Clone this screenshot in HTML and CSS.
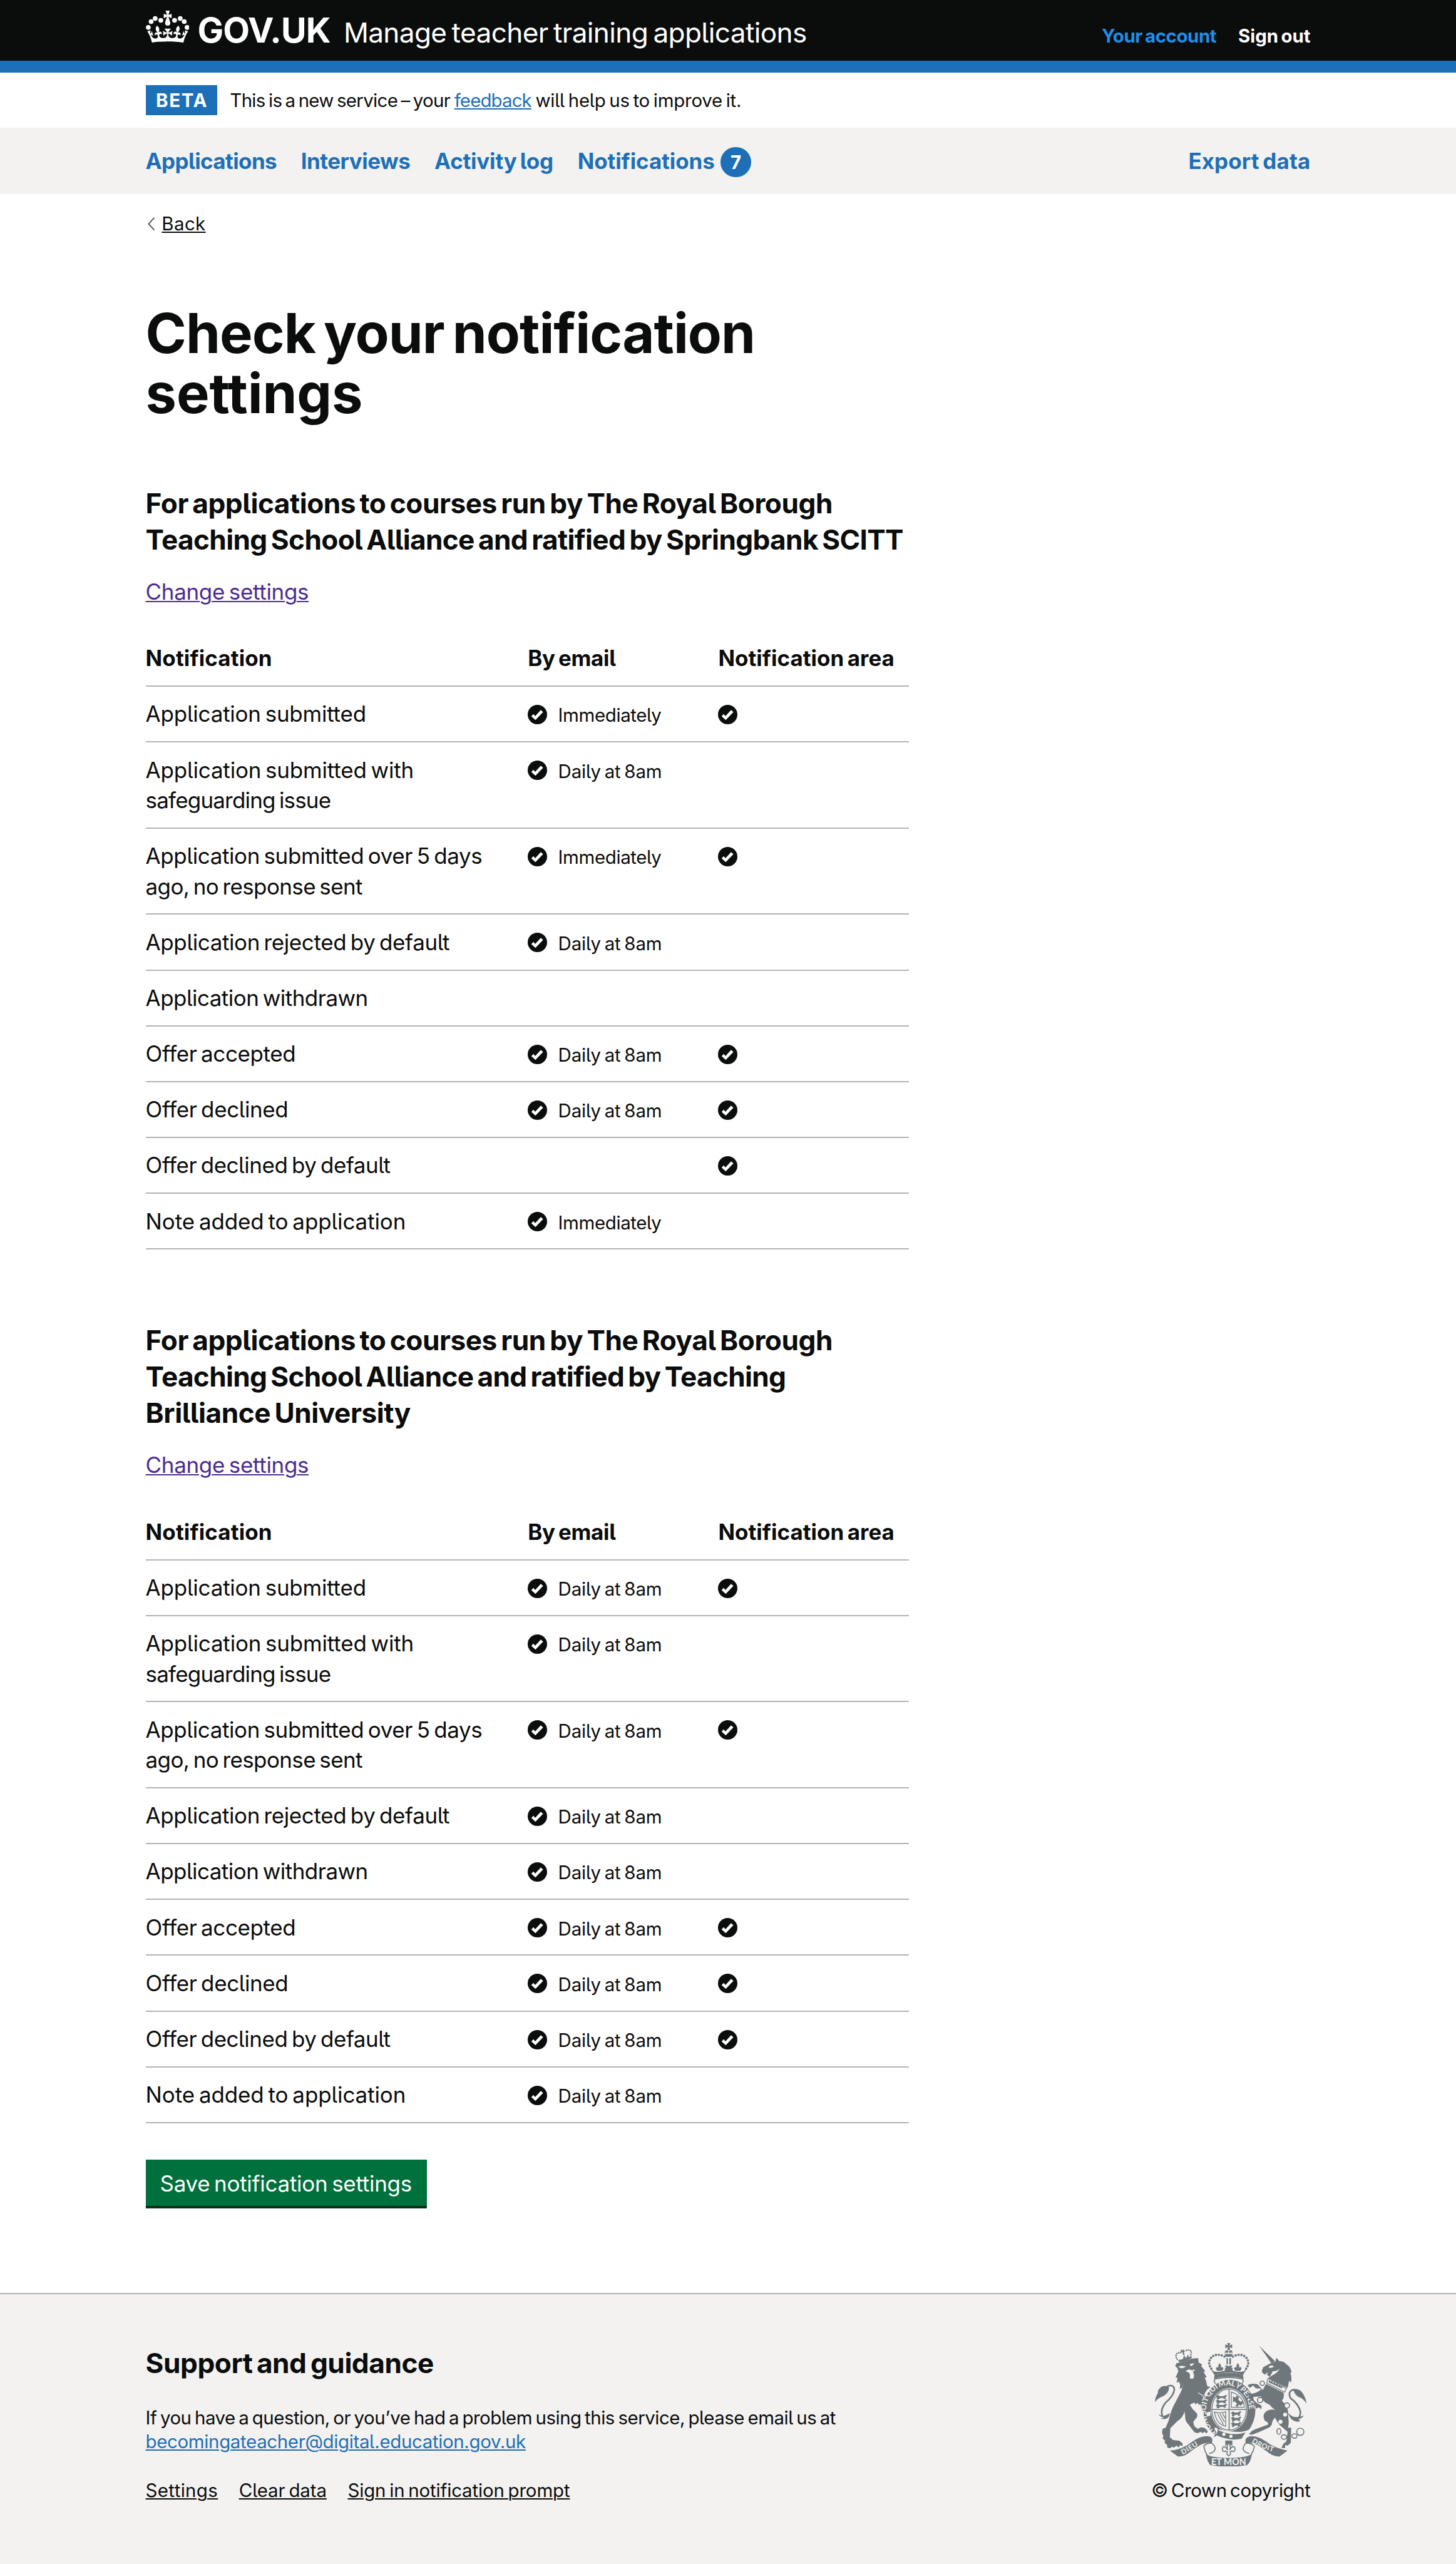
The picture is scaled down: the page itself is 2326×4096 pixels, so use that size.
FILE: index.html
```html
<!DOCTYPE html>
<html lang="en">
<head>
<meta charset="utf-8">
<title>Check your notification settings – Manage teacher training applications – GOV.UK</title>
<link rel="stylesheet" href="styles.css">
</head>
<body>
<svg class="defs" width="0" height="0" aria-hidden="true">
  <symbol id="tick" viewBox="0 0 32 32">
    <circle cx="16" cy="16" r="16" fill="#0b0c0c"/>
    <path d="M6 18.8 9.4 15.2 12.4 18.6 21.6 8.4 25.4 11.8 12.8 25Z" fill="#fff"/>
  </symbol>
</svg>

<header class="header">
  <div class="container header-row">
    <a class="logo" href="#">
      <svg class="crown" viewBox="0 4 35.6 26.1" aria-hidden="true">
        <g id="crown-half">
          <path d="M17.8 29.1c4.6 0 8.9.3 12.8.9 1.1-4.6 2.4-7.2 3.8-9.1l-2.6-.9c.3 1.3.3 1.9 0 2.8-.4-.4-.8-1.2-1.1-2.4l-1.2 4.2c.8-.5 1.4-.9 2-.9-1.2 2.6-2.7 3.2-4.2 3-1.2-.2-1.7-1.3-1.5-2.2.3-1.3 1.6-1.6 2.2-.1 1.2-2.4-.8-3.1-2.1-2.4 1.9-1.9 2.2-3.6.6-5.7-2.2 1.7-2.2 3.3-1.2 5.6-1.3-1.5-3.3-.7-2.5 1.7.9-1.4 2.1-.5 1.9.8-.2 1.1-1.7 2.1-3.5 1.9-2.7-.2-2.9-2.1-2.9-3.6.7-.1 1.9.5 2.9 1.9l.4-4.3c-1.1 1.1-2.1 1.4-3.2 1.4.4-1.2 2.1-3 2.1-3H17.8Z"/>
          <circle cx="33.6" cy="17.7" r="1.95"/><circle cx="31.3" cy="12.9" r="1.95"/><circle cx="28" cy="10.4" r="1.95"/><circle cx="23.4" cy="11.9" r="1.95"/>
          <path d="M17.8 4H19.5L18.5 7.1 18.8 7.4 21 6.6V10.2L18.7 9 18.5 9.4 19.9 13.6Q20.2 16.2 17.8 16.3Z"/>
        </g>
        <use href="#crown-half" transform="matrix(-1 0 0 1 35.6 0)"/>
      </svg>
      <span class="logotype k15">GOV.UK</span>
    </a>
    <a class="service k15" href="#">Manage teacher training applications</a>
    <nav class="account">
      <a class="current k15" href="#">Your account</a>
      <a class="k3" href="#">Sign out</a>
    </nav>
  </div>
</header>

<div class="container phase">
  <strong class="tag">BETA</strong>
  <span class="phase-text"><span class="k23">This is a new service – your</span> <a class="link k30" href="#">feedback</a> <span class="k8">will help us to improve it.</span></span>
</div>

<div class="nav">
  <nav class="container nav-row">
    <a class="k18" href="#">Applications</a>
    <a class="k15" href="#">Interviews</a>
    <a class="k6" href="#">Activity log</a>
    <a class="nav-notifications" href="#"><span class="k3">Notifications</span><span class="badge">7</span></a>
    <a class="nav-end p3" href="#">Export data</a>
  </nav>
</div>

<main class="container main">
  <a class="back" href="#"><svg class="chevron" viewBox="0 0 12 22" aria-hidden="true"><path d="M10.8.8 1.5 11 10.8 21.2" fill="none" stroke="#505a5f" stroke-width="2"/></svg><span class="p12">Back</span></a>

  <h1><span class="line k11">Check your notification</span> <span class="line k2">settings</span></h1>

  <section class="group">
    <h2><span class="line k11">For applications to courses run by The Royal Borough</span> <span class="line k15">Teaching School Alliance and ratified by Springbank SCITT</span></h2>
    <a class="change k9" href="#">Change settings</a>
    <div class="table" role="table">
      <div class="row head" role="row"><span class="p3">Notification</span><span class="k9">By email</span><span>Notification area</span></div>
      <div class="row" role="row"><span class="k6">Application submitted</span><span class="email"><svg class="tick"><use href="#tick"/></svg><span class="k13">Immediately</span></span><span class="email"><svg class="tick"><use href="#tick"/></svg></span></div>
      <div class="row tall" role="row"><span><span class="line k5">Application submitted with</span> <span class="line k23">safeguarding issue</span></span><span class="email"><svg class="tick"><use href="#tick"/></svg><span class="k5">Daily at 8am</span></span></div>
      <div class="row tall" role="row"><span><span class="line k11">Application submitted over 5 days</span> <span class="line k18">ago, no response sent</span></span><span class="email"><svg class="tick"><use href="#tick"/></svg><span class="k13">Immediately</span></span><span class="email"><svg class="tick"><use href="#tick"/></svg></span></div>
      <div class="row" role="row"><span class="k11">Application rejected by default</span><span class="email"><svg class="tick"><use href="#tick"/></svg><span class="k5">Daily at 8am</span></span></div>
      <div class="row" role="row"><span class="k15">Application withdrawn</span></div>
      <div class="row" role="row"><span class="k11">Offer accepted</span><span class="email"><svg class="tick"><use href="#tick"/></svg><span class="k5">Daily at 8am</span></span><span class="email"><svg class="tick"><use href="#tick"/></svg></span></div>
      <div class="row" role="row"><span class="k11">Offer declined</span><span class="email"><svg class="tick"><use href="#tick"/></svg><span class="k5">Daily at 8am</span></span><span class="email"><svg class="tick"><use href="#tick"/></svg></span></div>
      <div class="row" role="row"><span class="k13">Offer declined by default</span><span></span><span class="email"><svg class="tick"><use href="#tick"/></svg></span></div>
      <div class="row" role="row"><span class="k3">Note added to application</span><span class="email"><svg class="tick"><use href="#tick"/></svg><span class="k13">Immediately</span></span></div>
    </div>
  </section>

  <section class="group">
    <h2><span class="line k11">For applications to courses run by The Royal Borough</span> <span class="line k17">Teaching School Alliance and ratified by Teaching</span> <span class="line k11">Brilliance University</span></h2>
    <a class="change k9" href="#">Change settings</a>
    <div class="table" role="table">
      <div class="row head" role="row"><span class="p3">Notification</span><span class="k9">By email</span><span>Notification area</span></div>
      <div class="row" role="row"><span class="k6">Application submitted</span><span class="email"><svg class="tick"><use href="#tick"/></svg><span class="k5">Daily at 8am</span></span><span class="email"><svg class="tick"><use href="#tick"/></svg></span></div>
      <div class="row tall" role="row"><span><span class="line k5">Application submitted with</span> <span class="line k23">safeguarding issue</span></span><span class="email"><svg class="tick"><use href="#tick"/></svg><span class="k5">Daily at 8am</span></span></div>
      <div class="row tall" role="row"><span><span class="line k11">Application submitted over 5 days</span> <span class="line k18">ago, no response sent</span></span><span class="email"><svg class="tick"><use href="#tick"/></svg><span class="k5">Daily at 8am</span></span><span class="email"><svg class="tick"><use href="#tick"/></svg></span></div>
      <div class="row" role="row"><span class="k11">Application rejected by default</span><span class="email"><svg class="tick"><use href="#tick"/></svg><span class="k5">Daily at 8am</span></span></div>
      <div class="row" role="row"><span class="k15">Application withdrawn</span><span class="email"><svg class="tick"><use href="#tick"/></svg><span class="k5">Daily at 8am</span></span></div>
      <div class="row" role="row"><span class="k11">Offer accepted</span><span class="email"><svg class="tick"><use href="#tick"/></svg><span class="k5">Daily at 8am</span></span><span class="email"><svg class="tick"><use href="#tick"/></svg></span></div>
      <div class="row" role="row"><span class="k11">Offer declined</span><span class="email"><svg class="tick"><use href="#tick"/></svg><span class="k5">Daily at 8am</span></span><span class="email"><svg class="tick"><use href="#tick"/></svg></span></div>
      <div class="row" role="row"><span class="k13">Offer declined by default</span><span class="email"><svg class="tick"><use href="#tick"/></svg><span class="k5">Daily at 8am</span></span><span class="email"><svg class="tick"><use href="#tick"/></svg></span></div>
      <div class="row" role="row"><span class="k3">Note added to application</span><span class="email"><svg class="tick"><use href="#tick"/></svg><span class="k5">Daily at 8am</span></span></div>
    </div>
  </section>

  <button class="button k8" type="button">Save notification settings</button>
</main>

<footer class="footer">
  <div class="container footer-row">
    <div class="footer-main">
      <h2 class="k11">Support and guidance</h2>
      <p><span class="line k16">If you have a question, or you’ve had a problem using this service, please email us at</span> <a class="link k12" href="#">becomingateacher@digital.education.gov.uk</a></p>
      <div class="footer-links"><a class="p12" href="#">Settings</a><a class="k3" href="#">Clear data</a><a class="k5" href="#">Sign in notification prompt</a></div>
    </div>
    <div class="footer-side">
      <svg class="crest" viewBox="72 66 750 612" aria-hidden="true">
        <defs>
          <path id="p-dieu" d="M210 618Q262 590 322 548"/>
          <path id="p-droit" d="M550 556Q600 592 690 614"/>
          <path id="p-garter" d="M371 507A107 127 0 1 1 505 495"/>
          <g id="lions">
            <path d="M0 8l8-6 10 5 14-1 8-6 4 5-7 8 4 6-9 1-4-5-12 2-5 6-8-2 3-6z"/>
            <path d="M0 30l8-6 10 5 14-1 8-6 4 5-7 8 4 6-9 1-4-5-12 2-5 6-8-2 3-6z"/>
            <path d="M0 52l8-6 10 5 14-1 8-6 4 5-7 8 4 6-9 1-4-5-12 2-5 6-8-2 3-6z"/>
          </g>
          <g id="arch">
            <path class="beads" d="M458 133Q500 112 525 140Q545 165 520 197"/>
            <path d="M482 165Q492 178 488 187Q498 182 501 192L494 204H470L463 192Q467 182 476 187Q472 178 482 165Z"/>
            <path d="M528 190 508 224Q475 212 437 212V180L450 177 444 192 456 188V204L446 200 470 206Q490 212 512 205Z"/>
          </g>
        </defs>

        <!-- lion supporter -->
        <path d="M172 180 180 165Q215 160 252 143L286 140 288 162 306 172 301 180 322 206 312 208 328 235 318 238Q326 250 330 278L347 284Q325 296 316 322L340 355 345 380 347 404 334 402 332 422 322 414 316 420 312 404 300 390 298 368 290 372 282 362 272 370 268 360 245 370Q252 388 278 412Q288 428 272 442L262 455Q262 480 285 490L300 482 322 487 334 503 326 514 318 504 308 512 296 505 286 512 268 508 237 468Q220 450 222 430L218 402Q215 432 180 455L148 488 146 532 162 546 192 549 209 562 208 578 198 570 190 582 178 574 166 584 156 578 148 586 134 584 132 570 120 560 122 548 110 538 114 524 107 512 110 490 125 485 140 450Q150 400 174 358L200 308 215 268 206 288 195 293 197 270 190 256 179 263 184 238 174 236 188 206 183 190Z"/>
        <path class="paper" d="M188 182Q206 176 226 182Q212 192 198 190ZM244 170 266 166Q262 178 248 180ZM224 206Q238 190 258 202 262 192 270 200L260 208Q268 226 264 238A11 11 0 0 1 244 236Q248 220 240 212Z"/>
        <path class="paper-line" d="M286 312Q330 335 344 365" stroke-width="4"/>
        <path d="M72 358Q74 330 86 316 84 292 108 280 126 274 142 284 142 312 114 328 86 338 72 358Z"/>
        <path class="line-art" d="M132 280Q168 268 168 298 164 328 124 362 96 398 110 430" stroke-width="8"/>
        <path d="M90 418Q112 436 146 412L142 428Q130 448 100 440L118 434Q96 432 90 418Z"/>
        <!-- lion crown -->
        <path d="M186 150 194 162Q225 158 254 140L252 126 240 138 236 122 226 142 216 126 210 146Z"/>
        <path class="beads small" d="M182 146Q168 125 186 115L204 112M250 122Q256 102 238 100L220 104"/>
        <path d="M200 98l10 4 4-6 3 8 6 2-8 4 4 16-8-2-3-14-8 0z"/>

        <!-- royal crown -->
        <use href="#arch"/><use href="#arch" transform="matrix(-1 0 0 1 874 0)"/>
        <path d="M430 66H444L441 78 454 72V92L441 86 444 100H430L433 86 420 92V72L433 78Z"/>
        <path d="M422 102H435V114H416ZM439 102H452L457 114H439ZM416 120H458L450 134H424ZM426 140H433V172H426ZM440 140H448V172H440ZM418 176 437 184 456 176 448 194 456 210H418L426 194Z"/>
        <path d="M367 222Q437 204 507 222L511 243Q437 222 364 243Z"/>
        <path class="line-art" d="M370 244Q437 228 504 244 514 252 502 268M370 244Q360 252 372 268" stroke-width="5"/>

        <!-- garter and shield -->
        <ellipse cx="440" cy="397" rx="129" ry="149"/>
        <ellipse class="paper" cx="439" cy="395" rx="90" ry="106"/>
        <ellipse class="line-art" cx="439" cy="395" rx="85" ry="101" stroke-width="4"/>
        <path class="line-art" d="M439 294V498M352 395H526" stroke-width="5"/>
        <use href="#lions" transform="translate(372 322) scale(1.3 1)"/>
        <use href="#lions" transform="translate(448 402) scale(1.15 1.2)"/>
        <path class="line-art" d="M450 308V384H514Q512 330 450 308Z" stroke-width="4"/>
        <path d="M458 330l12 6 6-10 12 8-4 12 14 12 8-8 4 12-14 14-10-6-4 12-12-4 8-12-12-12-8 6z"/>
        <path class="line-art" d="M366 408Q392 416 422 406V478Q378 470 366 408ZM382 418 412 470M394 416 416 456M406 414 420 438" stroke-width="4"/>
        <text class="motto ring"><textPath href="#p-garter">HONI SOIT QUI MAL Y PENSE</textPath></text>
        <path class="paper" d="M326 410 348 404 346 425 330 430Z"/>
        <path class="paper" d="M364 486Q380 478 386 492 500 520 545 490L540 520Q500 556 440 552 390 545 366 528Z"/>
        <path d="M384 496Q460 530 520 508L500 540Q440 552 376 522ZM480 494 512 474 498 506Z"/>
        <circle class="paper" cx="413" cy="517" r="8"/><circle class="paper" cx="448" cy="527" r="8"/>
        <path class="line-art" d="M366 480Q388 482 386 500T368 526Q378 510 370 502T366 480Z" stroke-width="5"/>

        <!-- unicorn supporter -->
        <path d="M588 80 666 156 648 166Z"/>
        <path d="M601 202 608 185 640 168 668 157 672 139 688 156Q712 156 720 170 742 182 748 210L742 214Q750 235 745 262L736 252 728 288 632 240 654 225Q678 214 690 192 672 208 655 205L640 234 626 222 632 210 615 222 603 212Z"/>
        <path class="paper" d="M636 182Q650 172 660 182 650 192 636 188Z"/>
        <path d="M622 268 708 312Q714 335 700 352 722 368 730 400L732 440Q736 462 730 485L746 485 744 560 728 574 716 570 716 585 698 585 706 566 722 552 728 505 690 472Q672 450 666 434 650 450 650 470L640 482 590 505 555 519 536 518 552 500 570 492 630 470Q638 460 615 450 600 420 625 402 648 390 668 398 650 386 640 372 600 355 598 330L560 332 555 342 575 362 600 376 598 393 586 384 572 390 565 360 533 337 540 320 570 312Q592 304 598 292L570 290 558 276 542 288 530 276Q545 262 580 270L605 298Z"/>
        <path class="crest-collar" d="M632 240 722 290 713 309 625 264Z"/>
        <path d="M634 260l4-14 8 12 6-8 4 16 8-10 5 14 9-8 4 15 9-8 3 14 9-6-2 14z"/>
        <g class="line-art" stroke-width="5">
          <circle class="paper" cx="603" cy="265" r="11"/><circle class="paper" cx="592" cy="348" r="13"/><circle class="paper" cx="725" cy="375" r="13"/>
          <ellipse cx="685" cy="503" rx="10" ry="14"/><ellipse cx="710" cy="531" rx="13" ry="11"/><ellipse cx="762" cy="526" rx="13" ry="11"/><circle cx="791" cy="505" r="18"/>
        </g>
        <circle class="paper" cx="716" cy="420" r="10"/><circle class="paper" cx="693" cy="455" r="10"/>
        <path d="M822 366Q816 322 790 300 766 288 756 298 768 330 790 335 810 345 822 366Z"/>
        <path class="line-art" d="M764 296Q726 300 742 338 784 368 792 408 790 432 780 438" stroke-width="8"/>
        <path d="M730 410Q758 446 808 424 800 440 780 442L790 448Q786 462 758 450 738 438 730 410Z"/>

        <!-- ribbon -->
        <path d="M146 598Q205 594 255 555 300 522 340 527 362 532 354 562 328 556 300 568 262 590 235 612 212 628 185 627Z"/>
        <path d="M728 598Q660 585 620 552 580 524 540 527 514 534 521 562 548 556 578 570 610 590 640 612 665 630 690 626Z"/>
        <path class="line-art" d="M352 560Q320 562 314 578 318 600 330 620M352 560Q372 574 370 592 362 610 340 612M523 560Q554 562 564 578 560 600 546 620M523 560Q508 574 508 592 516 608 538 612" stroke-width="5"/>
        <path d="M324 613Q345 634 437 634T552 613Q546 655 528 670 437 686 346 670 330 652 324 613Z"/>
        <text class="motto"><textPath href="#p-dieu">DIEU</textPath></text>
        <text class="motto"><textPath href="#p-droit">DROIT</textPath></text>
        <text class="motto mon" x="437" y="669" text-anchor="middle">ET MON</text>
        <path d="M420 548H455V576L446 568 437 560 428 568 420 576Z"/>
        <path class="line-art" d="M437 560Q424 575 432 596 426 580 412 578 402 584 408 600 414 606 420 600 426 604 430 604L428 616 437 624 446 616 444 604Q448 604 454 600 460 606 466 600 472 584 462 578 448 580 442 596 450 575 437 560Z" stroke-width="5"/>
      </svg>
      <a class="copyright k15" href="#">© Crown copyright</a>
    </div>
  </div>
</footer>
</body>
</html>
```
FILE: styles.css
```css
html { font-size: 19.38333px; }

* { box-sizing: border-box; word-spacing: -.08em; }

body {
  margin: 0;
  background: #fff;
  color: #0b0c0c;
  font-family: Inter, "Noto Sans", sans-serif;
  font-size: 1.805rem;
  font-feature-settings: "cv05";
  line-height: 2.5rem;
  white-space: nowrap;
}

a { color: inherit; text-decoration: none; }
h1, h2, p { margin: 0; }
.defs { position: absolute; }
.line { display: block; }
.container { width: 96rem; margin: 0 auto; }

/* tracking, in thousandths of an em */
.k2 { letter-spacing: -.002em; }
.k3 { letter-spacing: -.003em; }
.k5 { letter-spacing: -.005em; }
.k6 { letter-spacing: -.006em; }
.k8 { letter-spacing: -.0075em; }
.k9 { letter-spacing: -.009em; }
.k11 { letter-spacing: -.011em; }
.k12 { letter-spacing: -.012em; }
.k13 { letter-spacing: -.013em; }
.k15 { letter-spacing: -.0152em; }
.k16 { letter-spacing: -.0162em; }
.k17 { letter-spacing: -.0165em; }
.k18 { letter-spacing: -.0175em; }
.k23 { letter-spacing: -.023em; }
.k30 { letter-spacing: -.03em; }
.p3 { letter-spacing: .003em; }
.p12 { letter-spacing: .012em; }

.link, .change, .back span, .footer-links a {
  text-decoration: underline;
  text-decoration-thickness: 2px;
  text-underline-offset: 2px;
}
.link { color: #1d70b8; }

/* header */
.header {
  height: 6rem;
  background: #0b0c0c;
  border-bottom: 1rem solid #1d70b8;
  color: #fff;
}
.header-row {
  display: flex;
  align-items: baseline;
  padding-top: .87rem;
  line-height: 3rem;
}
.logo { display: flex; align-items: baseline; width: 16.32rem; }
.crown { width: 3.6rem; height: 2.64rem; margin: 0 .675rem -.2rem 0; fill: #fff; }
.logotype { font-size: 2.865rem; font-weight: 700; }
.service { font-size: 2.28rem; }
.account {
  display: flex;
  gap: 1.8rem;
  margin-left: auto;
  font-size: 1.52rem;
  font-weight: 700;
}
.account .current { color: #1d8feb; }

/* phase banner */
.phase { display: flex; gap: 1.05rem; padding: 1rem 0; font-size: 1.52rem; }
.tag {
  width: 5.9rem;
  background: #1d70b8;
  color: #fff;
  font-weight: 700;
  letter-spacing: .059em;
  text-indent: .059em;
  text-align: center;
}
.phase-text .link { margin: 0 .03rem; }

/* primary navigation */
.nav { background: #f3f2f1; color: #1d70b8; font-weight: 700; }
.nav-row { display: flex; align-items: center; gap: 2rem; height: 5.5rem; }
.nav-notifications { display: flex; align-items: center; gap: .5rem; }
.badge {
  width: 2.5rem;
  height: 2.5rem;
  margin: .2rem 0 0;
  border-radius: 50%;
  background: #1d70b8;
  color: #fff;
  font-size: 1.52rem;
  text-align: center;
}
.nav-end { margin-left: auto; }

/* main */
.main { padding-top: 1.2rem; }
.back { display: flex; align-items: center; font-size: 1.52rem; }
.chevron { width: .6rem; height: 1.1rem; margin: 0 .58rem 0 .15rem; }

h1 { margin-top: 5.25rem; font-size: 4.56rem; font-weight: 700; line-height: 5rem; }
h2 { font-size: 2.28rem; font-weight: 700; line-height: 3rem; }
.group { padding-top: 5.97rem; }
h1 + .group { padding-top: 5.02rem; }
.change { display: block; width: max-content; margin-top: 1.53rem; color: #4c2c92; }
.table { margin-top: 2rem; }

.row {
  display: grid;
  grid-template-columns: 31.5rem 15.7rem 15.7rem;
  width: 62.9rem;
  height: 4.6rem;
  padding-top: 1rem;
  border-bottom: 2px solid #b1b4b6;
}
.row.tall { height: 7.1rem; }
.row.tall .line { line-height: 2.5rem; }
.row.head { font-weight: 700; }
.email { display: flex; gap: .9rem; font-size: 1.52rem; line-height: 2.7rem; }
.tick { width: 1.6rem; height: 1.6rem; margin-top: .5rem; }

.button {
  display: block;
  width: 23.2rem;
  height: 3.8rem;
  margin: 3rem 0 7.2rem;
  padding: .1rem 0 0 1.18rem;
  border: 0;
  background: #00703c;
  box-shadow: 0 .2rem 0 #002d18;
  color: #fff;
  font-family: inherit;
  font-size: 1.805rem;
  font-feature-settings: inherit;
  line-height: 2.5rem;
  text-align: left;
}

/* footer */
.footer { height: 22.35rem; background: #f3f2f1; border-top: 2px solid #b1b4b6; font-size: 1.52rem; line-height: 2rem; }
.footer-row { display: flex; justify-content: space-between; }
.footer-main { padding-top: 4.17rem; }
.footer-main p { margin: 1.98rem 0 2rem; }
.footer-links { display: flex; gap: 1.73rem; }
.footer-side { display: flex; flex-direction: column; align-items: flex-end; padding-top: 4rem; }
.crest { width: 12.5rem; height: 10.2rem; margin: 0 .3rem .95rem 0; fill: #6f777b; }
.paper { fill: #f3f2f1; }
.line-art { fill: none; stroke: #6f777b; }
.line-art ellipse, .line-art circle:not(.paper) { fill: none; }
.paper-line { fill: none; stroke: #f3f2f1; }
.crest-collar { fill: #f3f2f1; stroke: #6f777b; stroke-width: 4; }
.beads { fill: none; stroke: #6f777b; stroke-width: 12; stroke-linecap: round; stroke-dasharray: 0 14.5; }
.beads.small { stroke-width: 8; stroke-dasharray: 0 10; }
.motto { fill: #f3f2f1; font-family: Lato, sans-serif; font-size: 35px; font-weight: 700; letter-spacing: 2px; word-spacing: 0; }
.motto.ring { font-size: 37px; letter-spacing: -.6px; }
.motto.mon { font-size: 44px; letter-spacing: 0; }
```
